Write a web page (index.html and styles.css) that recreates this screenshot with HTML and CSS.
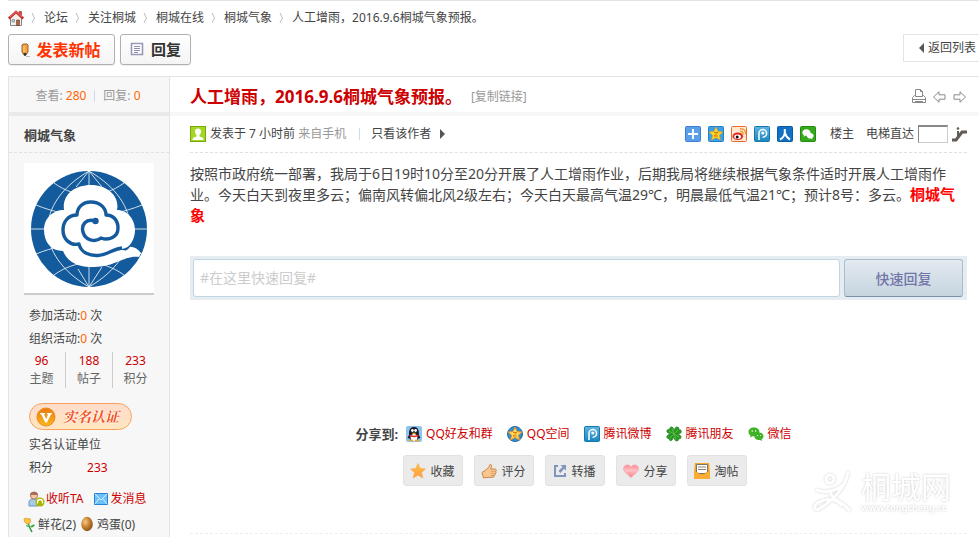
FILE: index.html
```
<!DOCTYPE html>
<html lang="zh-CN">
<head>
  <meta charset="UTF-8">
  <meta name="viewport" content="width=device-width, initial-scale=1.0">
  <title>人工增雨，2016.9.6桐城气象预报。</title>
  <link rel="stylesheet" href="styles.css">
</head>
<body>
  <!-- shared icons -->
  <svg class="defs" width="0" height="0">
    <defs>
      <linearGradient id="blue" x1="0" y1="0" x2="0" y2="1"><stop offset="0" stop-color="#5fb4e4"/><stop offset="1" stop-color="#1c86be"/></linearGradient>
      <linearGradient id="orange" x1="0" y1="0" x2="0" y2="1"><stop offset="0" stop-color="#e87a10"/><stop offset="1" stop-color="#fdb81c"/></linearGradient>
      <linearGradient id="star" x1="0" y1="0" x2="0" y2="1"><stop offset="0" stop-color="#ffc33a"/><stop offset="1" stop-color="#ff9a50"/></linearGradient>
      <linearGradient id="heart" x1="0" y1="0" x2="0" y2="1"><stop offset="0" stop-color="#ff8c94"/><stop offset=".45" stop-color="#ffc0c4"/><stop offset="1" stop-color="#fa7f88"/></linearGradient>
      <radialGradient id="egg" cx=".35" cy=".35" r=".7"><stop offset="0" stop-color="#f5c98a"/><stop offset=".5" stop-color="#c98634"/><stop offset="1" stop-color="#8a4f12"/></radialGradient>
      <symbol id="i-tweibo" viewBox="0 0 16 16">
        <rect x=".5" y=".5" width="15" height="15" rx="1" fill="url(#blue)" stroke="#1579ac"/>
        <path d="M5 14V7a3.8 3.8 0 1 1 3.6 4.2" fill="none" stroke="#fff" stroke-width="1.5"/>
        <circle cx="8.8" cy="7" r="1.6" fill="#fff"/>
      </symbol>
      <symbol id="i-wechat" viewBox="0 0 16 16">
        <path d="M5.8 1.5C2.600 1.500.5 3.500.5 6c0 1.500.8 2.700 2 3.500l-.4 2L4.400 10.300c4 .6 7-1.500 7-4.300s-2.400-4.500-5.600-4.500z"/>
        <path d="M11 6.500c-2.700 0-4.600 1.700-4.600 3.800s1.900 3.800 4.600 3.800l1-.1 2 1-.4-1.700c1.200-.7 1.900-1.800 1.900-3C15.500 8.200 13.600 6.500 11 6.500z"/>
      </symbol>
    </defs>
  </svg>

  <nav class="crumbs">
    <a href="#" class="home" aria-label="首页">
      <svg width="16" height="16" viewBox="0 0 16 16">
        <path d="M2.500 8v7.500h11V8L8 3z" fill="#f3efec" stroke="#8c8480"/>
        <path d="M11 1.500h2.500V5L11 3z" fill="#d8473f" stroke="#8d3a35" stroke-width=".6"/>
        <path d="M.8 8.500 8 1.800l7.200 6.700" fill="none" stroke="#cf2f2c" stroke-width="2.400"/>
        <path d="M2 7 8 1.500 14 7" fill="none" stroke="#ef8a84" stroke-width=".7"/>
        <path d="M8.500 15.500V10h3v5.500z" fill="#a8664a" stroke="#70402c" stroke-width=".6"/>
        <path d="M4 9.500h2.500V12H4z" fill="#b9c7d2" stroke="#77838d" stroke-width=".6"/>
      </svg>
    </a>
    <svg class="sep" width="6" height="12" viewBox="0 0 6 12"><path d="M1 1l2.500 5L1 11"/></svg>
    <a href="#">论坛</a>
    <svg class="sep" width="6" height="12" viewBox="0 0 6 12"><path d="M1 1l2.500 5L1 11"/></svg>
    <a href="#">关注桐城</a>
    <svg class="sep" width="6" height="12" viewBox="0 0 6 12"><path d="M1 1l2.500 5L1 11"/></svg>
    <a href="#">桐城在线</a>
    <svg class="sep" width="6" height="12" viewBox="0 0 6 12"><path d="M1 1l2.500 5L1 11"/></svg>
    <a href="#">桐城气象</a>
    <svg class="sep" width="6" height="12" viewBox="0 0 6 12"><path d="M1 1l2.500 5L1 11"/></svg>
    <a href="#">人工增雨，2016.9.6桐城气象预报。</a>
  </nav>

  <div class="toolbar">
    <button type="button" class="btn btn-new">
      <svg width="16" height="16" viewBox="0 0 16 16">
        <path d="M5 3l1-1h4l1 1v7l-2 3H7l-2-3z" fill="#f7a233" stroke="#8c6540"/>
        <path d="M7 4v6" stroke="#ffd694"/><path d="M6.500 11h3L8.500 14h-1z" fill="#333"/>
        <path d="M9 14.500h4" stroke="#bbb"/>
      </svg>
      发表新帖
    </button>
    <button type="button" class="btn btn-reply">
      <svg width="14" height="14" viewBox="0 0 14 14">
        <path d="M1.500 1.500h11v11h-11z" fill="#fff" stroke="#9799b8" stroke-width="1.600"/>
        <path d="M4 4.500h6M4 6.500h6M4 8.500h6M4 10.500h4" stroke="#8c8eae"/>
      </svg>
      回复
    </button>
    <a href="#" class="back"><i class="tri-left"></i>返回列表</a>
  </div>

  <main class="thread">
    <div class="side views">
      <span>查看: <em>280</em></span><span class="bar"></span><span>回复: <em>0</em></span>
    </div>
    <header class="subject">
      <h1>人工增雨，2016.9.6桐城气象预报。</h1>
      <a href="#" class="copy">[复制链接]</a>
      <div class="subject-tools">
        <a href="#" aria-label="打印">
          <svg width="14" height="15" viewBox="0 0 14 15"><path d="M3.500 7.500v-7h5l2 2v5M8.500.5v2h2M3.500 6.500h-1l-2 2v5h13v-5l-2-2h-1M3.500 7.500h7M.5 10.500h13M3 12.500h8"/></svg>
        </a>
        <a href="#" aria-label="上一主题">
          <svg width="13" height="12" viewBox="0 0 13 12"><path d="M.5 6 6 .8v3h6v4.400H6v3z"/></svg>
        </a>
        <a href="#" aria-label="下一主题">
          <svg width="13" height="12" viewBox="0 0 13 12"><path d="M12.500 6 7 .8v3H1v4.400h6v3z"/></svg>
        </a>
      </div>
    </header>

    <aside class="side author">
      <a href="#" class="author-name">桐城气象</a>
      <div class="avatar">
        <svg width="130" height="130" viewBox="0 0 130 130">
          <circle cx="65" cy="66" r="58" fill="#135b9c"/>
          <g fill="none" stroke="#fff" stroke-width=".8">
            <path d="M65 8v116M7 66h116M65 8C10 40 10 92 65 124M65 8c55 32 55 84 0 116M30 20c22 16 48 16 70 0M12 42c34 14 72 14 106 0M30 112c22-16 48-16 70 0M12 91c34-14 72-14 106 0M65 8L52 24M65 8l13 16M65 124L54 106M65 124l13-20"/>
          </g>
          <path d="M40 47C38 32 50 22 67 22s29 12 26 25c11 0 18 10 18 20 0 7-3 13-7 17 5-1 9 1 13 6l-2 4c-8-1-14 2-22 5-9 4-17 5-27 5-13 0-23-6-27-16C27 88 20 79 20 67c0-12 9-20 20-20z" fill="#fff"/>
          <path d="M71 58C62 55 57 62 59 69c2 8 12 11 18 6 8 3 17-1 17-10 0-8-5-13-12-13 0-8-7-13-15-13-9 0-14 6-14 13-9 0-14 7-14 15 0 9 7 16 16 14 2 9 11 12 19 11.500 10-.5 14-6.500 24-7.500" fill="none" stroke="#135b9c" stroke-width="3.400" stroke-linejoin="round"/>
          <path d="M94 86.500c5-.5 9-1.500 13-5-1 3-3 5-5 6z" fill="#135b9c"/>
          <circle cx="71.500" cy="58" r="3.200" fill="#135b9c"/>
        </svg>
      </div>
      <p>参加活动:<em>0</em> 次</p>
      <p>组织活动:<em>0</em> 次</p>
      <ul class="stats">
        <li><a href="#">96</a>主题</li>
        <li><a href="#">188</a>帖子</li>
        <li><a href="#">233</a>积分</li>
      </ul>
      <div class="badge">
        <svg width="20" height="20" viewBox="0 0 20 20">
          <circle cx="10" cy="10" r="9" fill="url(#orange)" stroke="#e98a20"/>
          <path d="M4 6h5v1.200H8l2.200 5L12 7.200h-1.200V6H16v1.200h-1L11 15.500H9.200L5.200 7.200H4z" fill="#fff"/>
        </svg>
        <span>实名认证</span>
      </div>
      <p>实名认证单位</p>
      <dl class="score"><dt>积分</dt><dd>233</dd></dl>
      <div class="actions">
        <a href="#">
          <svg width="17" height="16" viewBox="0 0 17 16">
            <path d="M1 15v-4c0-2 2-3 4.500-3S10 9 10 11v4z" fill="#a9cbe8" stroke="#6e96bb"/>
            <circle cx="6" cy="4.500" r="3.600" fill="#f3c7a0" stroke="#a0664c" stroke-width=".8"/>
            <path d="M2 4.500C1.500 0 10 0 10 4 7 4.500 5 3 2 4.500z" fill="#a5685a"/>
            <circle cx="12" cy="11" r="4.600" fill="#a8b400"/>
            <path d="M9.500 12.500v-1.500a2.500 2.500 0 0 1 5 0v1.500" fill="none" stroke="#fff" stroke-width="1.300"/>
          </svg>收听TA</a>
        <a href="#" class="mail">
          <svg width="14" height="12" viewBox="0 0 14 12"><path d="M.5.5h13v11H.5z" fill="#6cc2f8" stroke="#2a84d6"/><path d="M1 1l6 6 6-6M1 11l4-5M13 11 9 6" fill="none" stroke="#d8f1ff"/></svg>发消息</a>
      </div>
      <div class="gifts">
        <a href="#">
          <svg width="12" height="16" viewBox="0 0 12 16">
            <path d="M5 6c1 3 2 6 4 9" fill="none" stroke="#2f9c3a" stroke-width="1.400"/>
            <path d="M7 10c2-3 4-3 5-2-1 2-3 3-5 2zM6 10c-2 0-3-1-3-2 2 0 3 1 3 2z" fill="#3fae46"/>
            <path d="M1 2l2-.8L5 2l2-.5C8 4 7 7 5 7S1 5 1 2z" fill="#ffc63c" stroke="#cf8f1c" stroke-width=".7"/>
          </svg>鲜花(2)</a>
        <a href="#">
          <svg width="14" height="18" viewBox="0 0 14 18"><ellipse cx="7" cy="8" rx="5.800" ry="7.200" fill="url(#egg)"/></svg>鸡蛋(0)</a>
      </div>
    </aside>

    <article class="post">
      <div class="meta">
        <svg width="16" height="16" viewBox="0 0 16 16">
          <rect x=".5" y=".5" width="15" height="15" fill="#a4d624" stroke="#76a80c"/>
          <path d="M2.500 14c0-2.500 2-3 4-3.500V9C5.500 8 5 7 5 5.500 5 3.500 6.200 2.500 8 2.500s3 1 3 3C11 7 10.500 8 9.500 9v1.500c2 .5 4 1 4 3.500z" fill="#fff"/>
        </svg>
        <span>发表于 7 小时前 <a href="#" class="mobile">来自手机</a></span>
        <span class="bar"></span>
        <a href="#">只看该作者</a><i class="tri-right"></i>
        <div class="meta-right">
          <a href="#" aria-label="更多分享"><svg width="16" height="16" viewBox="0 0 16 16"><rect x=".5" y=".5" width="15" height="15" rx="1" fill="#5b9fea" stroke="#3c7fd0"/><path d="M8 3v10M3 8h10" stroke="#fff" stroke-width="2"/></svg></a>
          <a href="#" aria-label="QQ空间"><svg width="16" height="16" viewBox="0 0 16 16"><rect x=".5" y=".5" width="15" height="15" rx="1" fill="#3f9fe6" stroke="#2480c8"/><path d="M8 1l2 4.500 5 .5-3.700 3.200L12.500 14 8 11.500 3.500 14l1.200-4.800L1 6l5-.5z" fill="#ffd52e" stroke="#e8a300" stroke-width=".6"/><path d="M6 6.500h4l-4 3.500h4" fill="none" stroke="#d47a00"/></svg></a>
          <a href="#" aria-label="新浪微博"><svg width="16" height="16" viewBox="0 0 16 16"><rect x=".5" y=".5" width="15" height="15" rx="1" fill="#ffe9d2" stroke="#ee6a2c"/><ellipse cx="6.800" cy="10.200" rx="5.300" ry="3.800" fill="#e02a20"/><ellipse cx="6.600" cy="10.800" rx="3.400" ry="2.200" fill="#fff"/><circle cx="6.200" cy="11" r="1.500" fill="#111"/><path d="M9 5.500c2-.6 3.500.8 3 3M9 3c3.500-.8 6 1.500 5.500 5" fill="none" stroke="#f29220" stroke-width="1.300"/></svg></a>
          <a href="#" aria-label="腾讯微博"><svg width="16" height="16"><use href="#i-tweibo"/></svg></a>
          <a href="#" aria-label="人人网"><svg width="16" height="16" viewBox="0 0 16 16"><rect x=".5" y=".5" width="15" height="15" rx="1" fill="#1070c4" stroke="#0b5ba4"/><path d="M7.800 3v3.500C7.500 9.500 6 12 3 13.500M8 7c.8 3 2.500 5.200 5 6.500" fill="none" stroke="#fff" stroke-width="2"/></svg></a>
          <a href="#" aria-label="微信"><svg width="16" height="16" viewBox="0 0 16 16"><rect x=".5" y=".5" width="15" height="15" rx="1" fill="#35a81c" stroke="#258c10"/><use href="#i-wechat" x="2" y="2" width="12" height="12" fill="#fff"/></svg></a>
          <span class="floor">楼主</span>
          <label for="floorNo">电梯直达</label>
          <input type="text" id="floorNo">
          <button type="button" class="jump" aria-label="跳转到指定楼层">
            <svg width="15" height="15" viewBox="0 0 15 15"><path d="M0 13h4l6-8h5" fill="none" stroke="#605c54" stroke-width="3"/><path d="M6 4v5" stroke="#605c54" stroke-width="2"/><circle cx="6" cy="1.500" r="1.300" fill="#605c54"/></svg>
          </button>
        </div>
      </div>

      <p class="message">按照市政府统一部署，我局于6日19时10分至20分开展了人工增雨作业，后期我局将继续根据气象条件适时开展人工增雨作业。今天白天到夜里多云；偏南风转偏北风2级左右；今天白天最高气温29℃，明晨最低气温21℃；预计8号：多云。<strong>桐城气象</strong></p>

      <form class="quick">
        <input type="text" placeholder="#在这里快速回复#" aria-label="快速回复">
        <button type="submit">快速回复</button>
      </form>

      <div class="share">
        <strong>分享到:</strong>
        <a href="#"><svg width="16" height="16" viewBox="0 0 16 16">
          <rect width="16" height="16" rx="2" fill="#8fc4ea"/>
          <path d="M3 9C3 4 4 1 8 1s5 3 5 8l1.500 3-2 .5-2 2.500h-5l-2-2.500-2-.5z" fill="#141a2a"/>
          <ellipse cx="8" cy="11.500" rx="3.400" ry="3.500" fill="#fff"/><circle cx="6.400" cy="4.500" r="1.400" fill="#fff"/><circle cx="9.600" cy="4.500" r="1.400" fill="#fff"/>
          <path d="M5.500 6.800h5L8 8.400z" fill="#f7b119"/><path d="M3.500 8.500c3 1.500 6 1.500 9 0v1.700c-3 1.300-6 1.300-9 0z" fill="#e0312a"/>
          <path d="M3 14.500h4M9 14.500h4" stroke="#f2a31a" stroke-width="1.600"/></svg>QQ好友和群</a>
        <a href="#"><svg width="16" height="16" viewBox="0 0 16 16"><circle cx="8" cy="8" r="7.500" fill="#2f8fd0" stroke="#1c6ea8"/><path d="M8 1l2 4.500 5 .5-3.700 3.200L12.500 14 8 11.500 3.500 14l1.200-4.800L1 6l5-.5z" fill="#ffdc5a" stroke="#ee8a1c" stroke-width=".9"/><path d="M6 6.500h4l-4 3.500h4" fill="none" stroke="#e47a10"/></svg>QQ空间</a>
        <a href="#"><svg width="16" height="16"><use href="#i-tweibo"/></svg>腾讯微博</a>
        <a href="#"><svg width="16" height="16" viewBox="0 0 16 16"><path d="M8 8C4 8 0 7 1 4.500 1.500 3 3 3.500 3.500 3.500 3.500 2 4.500.5 6 1c2 .5 2 4 2 7 0-4 1-7.500 3.500-7C13 1.200 13 3 12.800 3.800c1-.3 2.500 0 2.500 1.700C15.300 8 12 8 8 8c4 0 7.500 1 7 3.500-.3 1.500-1.500 1.500-2.500 1 .3 1-.3 2.500-1.700 2.500C8.500 15 8 12 8 8c0 2 0 4-2.500 6.500C4 15 3 14 3.300 12.500 2 13 .8 12 .8 11 1 8.500 4 8 8 8z" fill="#2a9a24" stroke="#18801a" stroke-width=".7"/><path d="M3 5l10 6M6 2.500l4 11M12 4l-8 8" stroke="#74cf4e" stroke-width=".7"/></svg>腾讯朋友</a>
        <a href="#"><svg width="16" height="16" fill="#3fb225"><use href="#i-wechat"/><g fill="#fff"><circle cx="4.200" cy="5" r=".8"/><circle cx="7.600" cy="5" r=".8"/><circle cx="9.600" cy="9.500" r=".6"/><circle cx="12.500" cy="9.500" r=".6"/></g></svg>微信</a>
      </div>

      <div class="ops">
        <button type="button"><svg width="16" height="16" viewBox="0 0 16 16"><path d="M8 .5l2.200 5 5.300.5-4 3.500 1.300 5.500L8 12.200 3.200 15l1.300-5.500L.5 6l5.300-.5z" fill="url(#star)" stroke="#f8a84a" stroke-width=".6"/></svg>收藏</button>
        <button type="button"><svg width="16" height="16" viewBox="0 0 16 16"><path d="M1 9.500l3-2C6.500 6 8 4 9 1.500c2-.5 2 2 .8 4.500H14c1.800.2 1.700 2 .5 2.200 1 .8.6 2-.5 2.200.7.8.3 1.800-.8 2 .3.900-.2 1.700-1.200 1.800L6 14.500 2.500 15z" fill="#f8c68c" stroke="#c48a52"/><path d="M10 8.200h4M10 10.400h3.500M10 12.500h3" stroke="#cf965c" stroke-width=".8"/></svg>评分</button>
        <button type="button"><svg width="14" height="14" viewBox="0 0 14 14"><path d="M5 2H2v10h10V9" fill="none" stroke="#8095b8" stroke-width="2"/><path d="M7.500 1H13v5.500L11 4.800 7.500 9 5.500 7 9.500 3z" fill="#8095b8"/></svg>转播</button>
        <button type="button"><svg width="16" height="16" viewBox="0 0 16 16"><path d="M8 14.500C5 11.500.5 9 .5 5.500.5 1.500 6 .8 8 4c2-3.200 7.500-2.500 7.500 1.500C15.500 9 11 11.500 8 14.500z" fill="url(#heart)" stroke="#f4a0a6" stroke-width=".6"/></svg>分享</button>
        <button type="button"><svg width="16" height="16" viewBox="0 0 16 16"><path d="M1 0h14l1 9v7H0V9z" fill="#f6a62c"/><path d="M2.500 1.500h11v9h-11z" fill="#fff" stroke="#7d7468"/><path d="M4 4h8M4 6.500h8" stroke="#8d8478" stroke-width="1.200"/><path d="M0 9h4l2 3h4l2-3h4v7H0z" fill="#f9ad34"/></svg>淘帖</button>
      </div>

      <div class="watermark">
        <svg width="42" height="42" viewBox="0 0 42 42" fill="none" stroke="#fff" stroke-width="3" stroke-linecap="round"><circle cx="17" cy="8" r="4"/><path d="M35 2C32 16 22 28 6 38c-5 2-6-4 0-7 10-5 22-2 30 8M4 19c6 3 18 2 26-5M18 20c-2 6 6 8 10 14"/></svg>
        <div><b>桐城网</b><small>www.tongcheng.cc</small></div>
      </div>
    </article>
  </main>
</body>
</html>
```
FILE: styles.css
```
* {
  box-sizing: border-box;
}

body {
  display: flex;
  flex-direction: column;
  min-height: 100vh;
  margin: 0 0 0 8px;
  font: 12px/18px "Noto Sans", "Noto Sans CJK SC", sans-serif;
  color: #444;
  background: #fff;
  border-top: 1px solid #e5e5e0;
  overflow-x: hidden;
}

a {
  color: inherit;
  text-decoration: none;
}

em {
  font-style: normal;
  color: #f60;
}

p, h1, ul, dl, dd {
  margin: 0;
  padding: 0;
}

svg {
  flex: none;
}

button, input {
  font-family: inherit;
}

.defs {
  position: absolute;
}

.bar {
  width: 1px;
  height: 12px;
  background: #cde;
}

/* Breadcrumb */
.crumbs {
  display: flex;
  align-items: center;
  gap: 7px;
  height: 33px;
}

.home {
  display: flex;
}

.sep {
  fill: none;
  stroke: #bbb;
}

/* Toolbar */
.toolbar {
  display: flex;
  align-items: flex-start;
  gap: 5px;
  height: 42px;
}

.btn {
  display: flex;
  align-items: center;
  justify-content: center;
  height: 31px;
  border: 1px solid #b0b0b0;
  border-radius: 3px;
  background: linear-gradient(#fff, #f4f4f4);
  box-shadow: 0 1px 1px #eee;
  font-weight: bold;
  line-height: 20px;
  white-space: nowrap;
  padding: 0 8px 2px;
}

.btn-new {
  width: 107px;
  gap: 4px;
  padding: 0 14px 0 8px;
  font-size: 16px;
  color: #f30;
}

.btn-reply {
  width: 71px;
  gap: 7px;
  font-size: 15px;
  color: #333;
}

.back {
  display: flex;
  align-items: center;
  gap: 4px;
  height: 28px;
  margin-left: auto;
  padding: 0 3px 0 15px;
  border: 1px solid #e5e5e0;
  border-right: none;
}

.tri-left,
.tri-right {
  border: 5px solid transparent;
}

.tri-left {
  border-left-width: 0;
  border-right-color: #555;
}

.tri-right {
  border-right-width: 0;
  border-left-color: #555;
}

/* Thread */
.thread {
  flex: 1;
  display: grid;
  grid-template-columns: 162px 1fr;
  grid-template-rows: auto 1fr;
  border-top: 1px solid #e5e5e0;
}

.side {
  background: #f7f7f7;
  border: solid #e5e5e0;
  border-width: 0 1px;
}

.views {
  display: flex;
  align-items: center;
  justify-content: center;
  gap: 8px;
  height: 39px;
  padding: 3px 2px 0 0;
  color: #999;
  border-bottom: 4px solid #e9e9e9;
}

.subject {
  display: flex;
  align-items: center;
  gap: 9px;
  height: 39px;
  padding: 4px 13px 0 20px;
  border-bottom: 4px solid #f7f7f7;
}

.subject h1 {
  font-size: 17px;
  line-height: 24px;
  color: #c00;
}

.copy {
  color: #999;
}

.subject-tools {
  display: flex;
  align-items: center;
  gap: 7px;
  margin-left: auto;
}

.subject-tools svg {
  display: block;
  fill: none;
  stroke: #888;
}

/* Author column */
.author {
  line-height: 23px;
}

.author-name {
  display: block;
  height: 37px;
  padding: 8px 15px 0;
  font-size: 13px;
  font-weight: bold;
  border-bottom: 1px dashed #e0e0e0;
}

.avatar {
  width: 130px;
  height: 132px;
  margin: 10px 15px 9px;
  background: #fff;
  border-bottom: 2px solid #ccc;
}

.author p,
.score {
  padding-left: 20px;
}

.stats {
  display: grid;
  grid-template-columns: 47px 47px 46px;
  margin: 2px 9px 15px;
  list-style: none;
  text-align: center;
  line-height: 18px;
  color: #666;
}

.stats li + li {
  border-left: 1px solid #ccc;
}

.stats a {
  display: block;
  color: #c00;
}

.badge {
  display: flex;
  align-items: center;
  gap: 7px;
  width: 103px;
  height: 27px;
  margin: 0 0 3px 20px;
  padding-left: 6px;
  border: 1px solid #f7a05c;
  border-radius: 14px;
  background: linear-gradient(#ffdccb, #ffe6c0);
  color: #f0501c;
  font-family: "Noto Serif CJK SC", "Noto Sans CJK SC", serif;
  font-size: 14px;
  font-weight: bold;
  font-style: italic;
  text-shadow: 0 0 2px #fff, 0 0 2px #fff;
}

.score {
  display: flex;
  gap: 34px;
}

.score dd {
  color: #c00;
}

.actions,
.gifts {
  display: flex;
  align-items: center;
  white-space: nowrap;
}

.actions {
  gap: 10px;
  padding: 8px 0 3px 19px;
  color: #c00;
}

.gifts {
  gap: 4px;
  padding-left: 14px;
}

.actions a,
.gifts a {
  display: flex;
  align-items: center;
  gap: 1px;
}

.gifts a,
.actions .mail {
  gap: 3px;
}

/* Post */
.post {
  position: relative;
  align-self: start;
  margin: 0 12px 0 20px;
  padding-bottom: 47px;
  border-bottom: 1px dashed #eee;
}

.meta {
  display: flex;
  align-items: center;
  gap: 4px;
  height: 37px;
  border-bottom: 1px dashed #e0e0e0;
}

.meta .bar {
  margin: 0 7px 0 9px;
}

.meta .tri-right {
  margin-left: 5px;
}

.mobile {
  color: #999;
}

.meta-right {
  display: flex;
  align-items: center;
  gap: 7px;
  margin-left: auto;
}

.meta-right > a {
  display: flex;
}

.floor {
  margin: 0 5px 0 7px;
}

.meta-right label {
  margin-right: -3px;
}

.meta-right input {
  width: 30px;
  height: 18px;
  margin-right: -3px;
  padding: 0;
  border: 1px solid #ccc;
  border-top: 2px solid #888;
  border-left-color: #888;
}

.jump {
  display: flex;
  padding: 0;
  border: none;
  background: none;
}

.message {
  padding: 10px 8px 0 0;
  font-size: 14px;
  line-height: 21px;
}

.message strong {
  font-size: 15px;
  color: #f00;
}

.quick {
  display: flex;
  gap: 4px;
  margin-top: 30px;
  padding: 3px 4px 3px 3px;
  background: #e5edf2;
}

.quick input {
  flex: 1;
  min-width: 0;
  height: 38px;
  padding: 0 6px 2px;
  border: 1px solid #c2d5e3;
  border-radius: 3px;
  font-size: 14px;
}

.quick input::placeholder {
  color: #ccc;
}

.quick button {
  width: 119px;
  border: 1px solid #a9bccb;
  border-bottom-color: #7793ab;
  border-radius: 3px;
  background: linear-gradient(#e3eaf0, #c6d4df);
  color: #7375a8;
  font-size: 14px;
  font-weight: 500;
}

.share {
  display: flex;
  justify-content: center;
  align-items: center;
  gap: 14px;
  margin: 125px 10px 0 0;
}

.share strong {
  margin-right: -6px;
  font-size: 13px;
}

.share a {
  display: flex;
  align-items: center;
  gap: 4px;
  color: #c00;
}

.ops {
  display: flex;
  justify-content: center;
  gap: 11px;
  margin: 12px 8px 0 0;
}

.ops button {
  display: flex;
  align-items: center;
  justify-content: center;
  gap: 4px;
  width: 60px;
  height: 31px;
  padding: 0;
  border: 1px solid #e2e2e2;
  border-radius: 3px;
  background: #ebebeb;
  font-size: 12px;
  color: #444;
}

.watermark {
  position: absolute;
  right: 16px;
  bottom: 20px;
  display: flex;
  align-items: center;
  gap: 6px;
  color: #fff;
  filter: drop-shadow(0 0 1px #ccc);
}

.watermark b,
.watermark small {
  display: block;
}

.watermark b {
  font-size: 30px;
  font-weight: 400;
  line-height: 32px;
}

.watermark small {
  font-size: 9px;
  font-weight: bold;
  line-height: 10px;
}
```
